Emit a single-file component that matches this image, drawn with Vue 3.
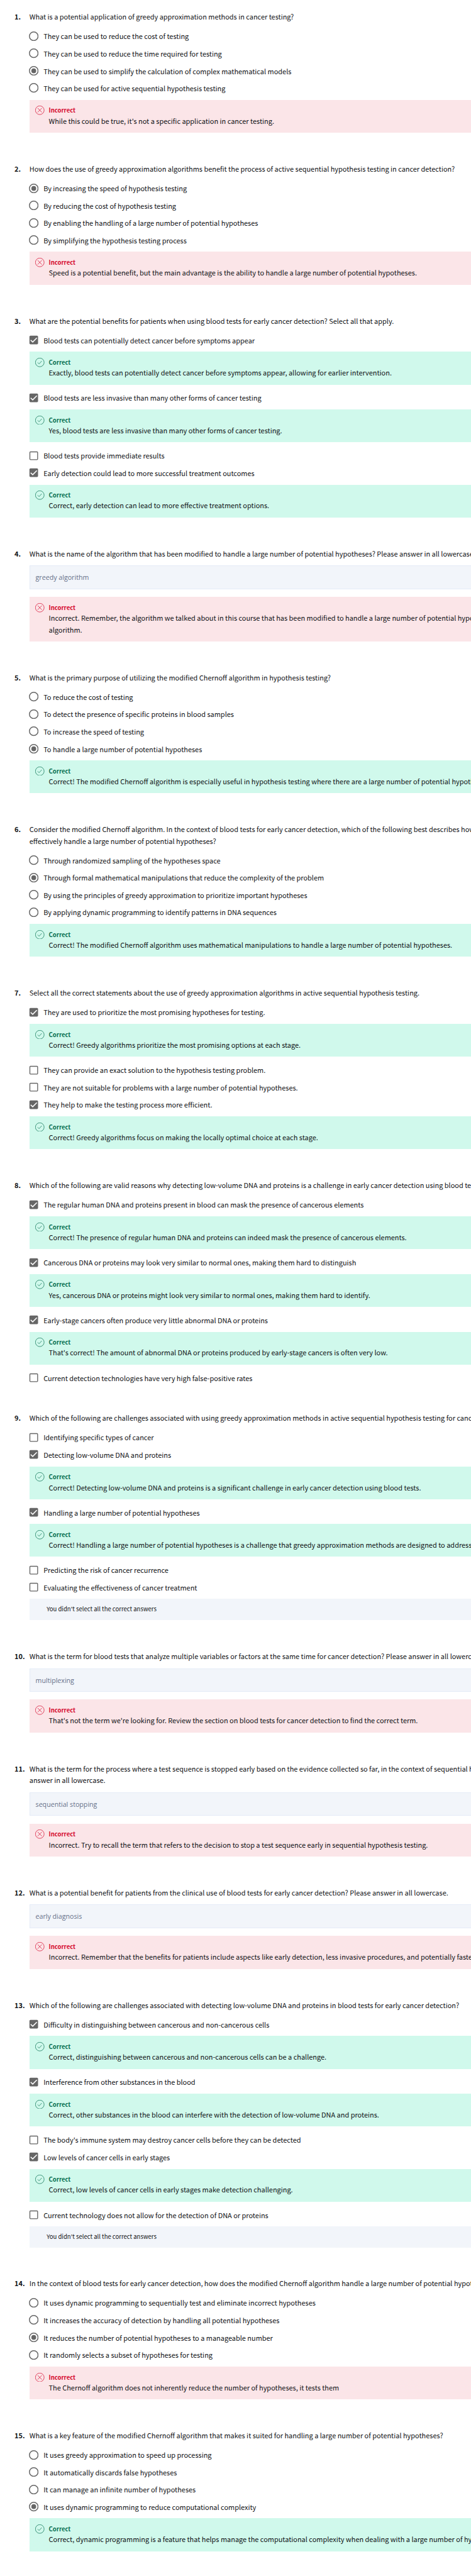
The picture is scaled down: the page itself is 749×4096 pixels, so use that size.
<script setup>
const right = (text) => ({ kind: 'correct', lines: [text] })
const wrong = (...lines) => ({ kind: 'incorrect', lines })
const opt = (label, on = false, feedback = null) => ({ label, on, feedback })

const questions = [
  {
    title: ['What is a potential application of greedy approximation methods in cancer testing?'],
    type: 'radio',
    options: [
      opt('They can be used to reduce the cost of testing'),
      opt('They can be used to reduce the time required for testing'),
      opt('They can be used to simplify the calculation of complex mathematical models', true),
      opt('They can be used for active sequential hypothesis testing'),
    ],
    feedback: wrong("While this could be true, it's not a specific application in cancer testing."),
  },
  {
    title: ['How does the use of greedy approximation algorithms benefit the process of active sequential hypothesis testing in cancer detection?'],
    type: 'radio',
    options: [
      opt('By increasing the speed of hypothesis testing', true),
      opt('By reducing the cost of hypothesis testing'),
      opt('By enabling the handling of a large number of potential hypotheses'),
      opt('By simplifying the hypothesis testing process'),
    ],
    feedback: wrong('Speed is a potential benefit, but the main advantage is the ability to handle a large number of potential hypotheses.'),
  },
  {
    title: ['What are the potential benefits for patients when using blood tests for early cancer detection? Select all that apply.'],
    type: 'check',
    options: [
      opt('Blood tests can potentially detect cancer before symptoms appear', true, right('Exactly, blood tests can potentially detect cancer before symptoms appear, allowing for earlier intervention.')),
      opt('Blood tests are less invasive than many other forms of cancer testing', true, right('Yes, blood tests are less invasive than many other forms of cancer testing.')),
      opt('Blood tests provide immediate results'),
      opt('Early detection could lead to more successful treatment outcomes', true, right('Correct, early detection can lead to more effective treatment options.')),
    ],
  },
  {
    title: ['What is the name of the algorithm that has been modified to handle a large number of potential hypotheses? Please answer in all lowercase.'],
    type: 'text',
    answer: 'greedy algorithm',
    feedback: wrong('Incorrect. Remember, the algorithm we talked about in this course that has been modified to handle a large number of potential hypotheses', 'algorithm.'),
  },
  {
    title: ['What is the primary purpose of utilizing the modified Chernoff algorithm in hypothesis testing?'],
    type: 'radio',
    options: [
      opt('To reduce the cost of testing'),
      opt('To detect the presence of specific proteins in blood samples'),
      opt('To increase the speed of testing'),
      opt('To handle a large number of potential hypotheses', true),
    ],
    feedback: right('Correct! The modified Chernoff algorithm is especially useful in hypothesis testing where there are a large number of potential hypotheses.'),
  },
  {
    title: ['Consider the modified Chernoff algorithm. In the context of blood tests for early cancer detection, which of the following best describes how', 'effectively handle a large number of potential hypotheses?'],
    type: 'radio',
    options: [
      opt('Through randomized sampling of the hypotheses space'),
      opt('Through formal mathematical manipulations that reduce the complexity of the problem', true),
      opt('By using the principles of greedy approximation to prioritize important hypotheses'),
      opt('By applying dynamic programming to identify patterns in DNA sequences'),
    ],
    feedback: right('Correct! The modified Chernoff algorithm uses mathematical manipulations to handle a large number of potential hypotheses.'),
  },
  {
    title: ['Select all the correct statements about the use of greedy approximation algorithms in active sequential hypothesis testing.'],
    type: 'check',
    options: [
      opt('They are used to prioritize the most promising hypotheses for testing.', true, right('Correct! Greedy algorithms prioritize the most promising options at each stage.')),
      opt('They can provide an exact solution to the hypothesis testing problem.'),
      opt('They are not suitable for problems with a large number of potential hypotheses.'),
      opt('They help to make the testing process more efficient.', true, right('Correct! Greedy algorithms focus on making the locally optimal choice at each stage.')),
    ],
  },
  {
    title: ['Which of the following are valid reasons why detecting low-volume DNA and proteins is a challenge in early cancer detection using blood tests?'],
    type: 'check',
    options: [
      opt('The regular human DNA and proteins present in blood can mask the presence of cancerous elements', true, right('Correct! The presence of regular human DNA and proteins can indeed mask the presence of cancerous elements.')),
      opt('Cancerous DNA or proteins may look very similar to normal ones, making them hard to distinguish', true, right('Yes, cancerous DNA or proteins might look very similar to normal ones, making them hard to identify.')),
      opt('Early-stage cancers often produce very little abnormal DNA or proteins', true, right("That's correct! The amount of abnormal DNA or proteins produced by early-stage cancers is often very low.")),
      opt('Current detection technologies have very high false-positive rates'),
    ],
  },
  {
    title: ['Which of the following are challenges associated with using greedy approximation methods in active sequential hypothesis testing for cancer'],
    type: 'check',
    options: [
      opt('Identifying specific types of cancer'),
      opt('Detecting low-volume DNA and proteins', true, right('Correct! Detecting low-volume DNA and proteins is a significant challenge in early cancer detection using blood tests.')),
      opt('Handling a large number of potential hypotheses', true, right('Correct! Handling a large number of potential hypotheses is a challenge that greedy approximation methods are designed to address.')),
      opt('Predicting the risk of cancer recurrence'),
      opt('Evaluating the effectiveness of cancer treatment'),
    ],
    notice: "You didn't select all the correct answers",
  },
  {
    title: ['What is the term for blood tests that analyze multiple variables or factors at the same time for cancer detection? Please answer in all lowercase.'],
    type: 'text',
    answer: 'multiplexing',
    feedback: wrong("That's not the term we're looking for. Review the section on blood tests for cancer detection to find the correct term."),
  },
  {
    title: ['What is the term for the process where a test sequence is stopped early based on the evidence collected so far, in the context of sequential hypothesis', 'answer in all lowercase.'],
    type: 'text',
    answer: 'sequential stopping',
    feedback: wrong('Incorrect. Try to recall the term that refers to the decision to stop a test sequence early in sequential hypothesis testing.'),
  },
  {
    title: ['What is a potential benefit for patients from the clinical use of blood tests for early cancer detection? Please answer in all lowercase.'],
    type: 'text',
    answer: 'early diagnosis',
    feedback: wrong('Incorrect. Remember that the benefits for patients include aspects like early detection, less invasive procedures, and potentially faster'),
  },
  {
    title: ['Which of the following are challenges associated with detecting low-volume DNA and proteins in blood tests for early cancer detection?'],
    type: 'check',
    options: [
      opt('Difficulty in distinguishing between cancerous and non-cancerous cells', true, right('Correct, distinguishing between cancerous and non-cancerous cells can be a challenge.')),
      opt('Interference from other substances in the blood', true, right('Correct, other substances in the blood can interfere with the detection of low-volume DNA and proteins.')),
      opt("The body's immune system may destroy cancer cells before they can be detected"),
      opt('Low levels of cancer cells in early stages', true, right('Correct, low levels of cancer cells in early stages make detection challenging.')),
      opt('Current technology does not allow for the detection of DNA or proteins'),
    ],
    notice: "You didn't select all the correct answers",
  },
  {
    title: ['In the context of blood tests for early cancer detection, how does the modified Chernoff algorithm handle a large number of potential hypotheses?'],
    type: 'radio',
    options: [
      opt('It uses dynamic programming to sequentially test and eliminate incorrect hypotheses'),
      opt('It increases the accuracy of detection by handling all potential hypotheses'),
      opt('It reduces the number of potential hypotheses to a manageable number', true),
      opt('It randomly selects a subset of hypotheses for testing'),
    ],
    feedback: wrong('The Chernoff algorithm does not inherently reduce the number of hypotheses, it tests them'),
  },
  {
    title: ['What is a key feature of the modified Chernoff algorithm that makes it suited for handling a large number of potential hypotheses?'],
    type: 'radio',
    options: [
      opt('It uses greedy approximation to speed up processing'),
      opt('It automatically discards false hypotheses'),
      opt('It can manage an infinite number of hypotheses'),
      opt('It uses dynamic programming to reduce computational complexity', true),
    ],
    feedback: right('Correct, dynamic programming is a feature that helps manage the computational complexity when dealing with a large number of hypotheses.'),
  },
]

// Flatten each question into the ordered list of blocks below its title.
const blocksOf = (q) => {
  const out = []
  if (q.type === 'text') out.push({ is: 'input', text: q.answer })
  for (const o of q.options || []) {
    out.push({ is: 'option', ...o })
    if (o.feedback) out.push({ is: 'feedback', ...o.feedback })
  }
  if (q.feedback) out.push({ is: 'feedback', ...q.feedback })
  if (q.notice) out.push({ is: 'notice', text: q.notice })
  return out
}
const items = questions.map((q, i) => ({ no: i + 1, title: q.title, type: q.type, blocks: blocksOf(q) }))
</script>

<template>
  <main class="quiz">
    <section v-for="q in items" :key="q.no" class="question">
      <div class="number">{{ q.no }}.</div>
      <div class="content">
        <div class="title">
          <div v-for="line in q.title" :key="line">{{ line }}</div>
        </div>
        <div class="blocks">
          <template v-for="(b, i) in q.blocks" :key="i">
            <div v-if="b.is === 'option'" class="option">
              <svg v-if="q.type === 'radio'" class="control" viewBox="0 0 28 28">
                <circle cx="14" cy="14" r="12.5" fill="#fff" stroke="#666" stroke-width="2.7" />
                <circle v-if="b.on" cx="14" cy="14" r="7" fill="#666" />
              </svg>
              <svg v-else class="control" viewBox="0 0 28 28">
                <rect v-if="b.on" x="1.5" y="1.5" width="25" height="25" rx="3" fill="#666" />
                <rect v-else x="2.75" y="2.75" width="22.5" height="22.5" rx="1.8" fill="#fff" stroke="#666" stroke-width="2.5" />
                <path v-if="b.on" d="M5 14.2l6 5.7L23 7.9" fill="none" stroke="#fff" stroke-width="2.8" />
              </svg>
              <span>{{ b.label }}</span>
            </div>
            <div v-else-if="b.is === 'feedback'" class="feedback" :class="b.kind">
              <svg class="mark" viewBox="0 0 26 26">
                <circle cx="13" cy="13" r="12.4" />
                <path v-if="b.kind === 'correct'" d="M7 13.3l4 4 7.7-8.3" />
                <path v-else d="M7 7l12 12M19 7L7 19" />
              </svg>
              <div>
                <div class="verdict">{{ b.kind === 'correct' ? 'Correct' : 'Incorrect' }}</div>
                <div v-for="line in b.lines" :key="line" class="line">{{ line }}</div>
              </div>
            </div>
            <div v-else-if="b.is === 'input'" class="answer">{{ b.text }}</div>
            <div v-else class="notice">{{ b.text }}</div>
          </template>
        </div>
      </div>
    </section>
  </main>
</template>

<style>
/* 1rem stands for 100 design units */
html {
  font-size: 54.752px;
  background: #fff;
}
</style>

<style scoped>
.quiz {
  box-sizing: border-box;
  width: 100%;
  height: 74.81rem;
  padding: 0.317rem 0 0 0.42rem;
  overflow: hidden;
  background: #fff;
  color: #0f1114;
  font-family: "Noto Sans CJK SC", "Noto Sans", sans-serif;
  font-size: 0.2rem;
  line-height: 0.3333rem;
  white-space: nowrap;
}
.question {
  display: flex;
  margin-bottom: 0.746rem;
}
.number {
  flex: none;
  width: 0.43rem;
  font-weight: 700;
}
.content {
  flex: 1;
  min-width: 0;
}
.title {
  padding-left: 0.005rem;
}
.blocks {
  display: flex;
  flex-direction: column;
  padding-top: 0.15rem;
}
.option {
  display: flex;
  align-items: center;
  height: 0.503rem;
}
.control {
  flex: none;
  width: 0.28rem;
  height: 0.28rem;
  margin: 0 0.148rem 0 -0.015rem;
}
.feedback {
  display: flex;
  box-sizing: border-box;
  margin: 0.089rem 0 0.133rem;
  padding: 0.177rem 0 0.181rem 0.177rem;
}
.mark {
  flex: none;
  width: 0.265rem;
  height: 0.265rem;
  margin-right: 0.125rem;
  fill: none;
  stroke: currentColor;
  stroke-width: 1.3;
}
.verdict {
  height: 0.26rem;
  font-size: 0.174rem;
  font-weight: 700;
  line-height: 0.26rem;
}
.line {
  color: #0f1114;
}
.correct {
  background: #d0f9ec;
  color: #087051;
}
.incorrect {
  background: #fbe5e8;
  color: #d50a2e;
}
.answer {
  box-sizing: border-box;
  height: 0.687rem;
  margin: 0.041rem 0 0.137rem;
  padding-left: 0.165rem;
  border: 0.01rem solid #e4ebf7;
  border-right: 0;
  background: #f2f5fa;
  color: #667089;
  font-family: "Open Sans", sans-serif;
  font-size: 0.195rem;
  line-height: 0.667rem;
}
.notice {
  box-sizing: border-box;
  height: 0.618rem;
  margin: 0.081rem 0 0.126rem;
  padding-left: 0.505rem;
  background: #f2f5fa;
  font-size: 0.174rem;
  line-height: 0.603rem;
}
</style>
